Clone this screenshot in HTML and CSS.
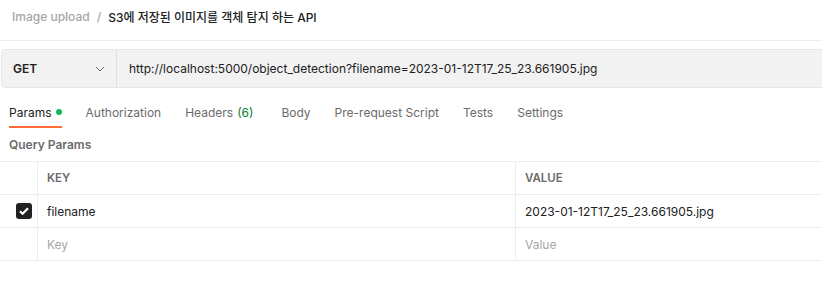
FILE: index.html
```html
<!DOCTYPE html>
<html>
<head>
    <meta charset="utf-8">
    <title>S3에 저장된 이미지를 객체 탐지 하는 API</title>
    <link rel="stylesheet" href="styles.css">
</head>
<body>
    <div class="breadcrumb">
        <span class="crumb-parent">Image upload</span>
        <span class="crumb-sep">/</span>
        <span class="crumb-title">S3에 저장된 이미지를 객체 탐지 하는 API</span>
    </div>

    <div class="url-bar">
        <div class="method">
            <span>GET</span>
            <svg class="chevron" width="10" height="6" viewBox="0 0 10 6">
                <path d="M1 1l4 4 4-4" fill="none" stroke="#6b6b6b" stroke-width="1"/>
            </svg>
        </div>
        <div class="url">http://localhost:5000/object_detection?filename=2023-01-12T17_25_23.661905.jpg</div>
    </div>

    <div class="tabs">
        <div class="tab active">Params<span class="dot"></span></div>
        <div class="tab">Authorization</div>
        <div class="tab">Headers <span class="count">(6)</span></div>
        <div class="tab">Body</div>
        <div class="tab">Pre-request Script</div>
        <div class="tab">Tests</div>
        <div class="tab">Settings</div>
    </div>

    <div class="section-title">Query Params</div>

    <div class="params">
        <div class="row head">
            <div class="cell check"></div>
            <div class="cell key">KEY</div>
            <div class="cell value">VALUE</div>
        </div>
        <div class="row">
            <div class="cell check">
                <span class="checkbox">
                    <svg width="10" height="8" viewBox="0 0 10 8">
                        <path d="M1 4.2l2.6 2.5L9 1.2" fill="none" stroke="#fff" stroke-width="2.2"/>
                    </svg>
                </span>
            </div>
            <div class="cell key">filename</div>
            <div class="cell value">2023-01-12T17_25_23.661905.jpg</div>
        </div>
        <div class="row">
            <div class="cell check"></div>
            <div class="cell key placeholder">Key</div>
            <div class="cell value placeholder">Value</div>
        </div>
    </div>
</body>
</html>
```

FILE: styles.css
```css
body {
    margin: 0;
    font-family: Inter, "Noto Sans CJK KR", sans-serif;
    font-size: 12px;
    color: #212121;
    background: #fff;
    overflow: hidden;
}
.breadcrumb {
    height: 32px;
    padding: 0 12px 8px;
    display: flex;
    align-items: center;
    border-bottom: 1px solid #ededed;
    margin-bottom: 8px;
    font-weight: 500;
}
.crumb-parent {
    color: #a6a6a6;
}
.crumb-sep {
    color: #a6a6a6;
    margin: 0 7px;
}
.crumb-title {
    color: #212121;
}
.url-bar {
    margin-left: 1px;
    margin-right: -10px;
    height: 37px;
    display: flex;
    background: #f2f2f2;
    border: 1px solid #e6e6e6;
    border-radius: 4px;
}
.method {
    width: 115px;
    display: flex;
    align-items: center;
    justify-content: space-between;
    padding: 0 11px;
    box-sizing: border-box;
    border-right: 1px solid #e0e0e0;
    font-weight: 600;
}
.chevron {
    margin-top: 1px;
}
.url {
    display: flex;
    align-items: center;
    padding-left: 12px;
}
.tabs {
    display: flex;
    gap: 24px;
    padding: 0 9px;
    margin-top: 10px;
    height: 30px;
}
.tab {
    color: #6b6b6b;
    display: flex;
    align-items: center;
    height: 28px;
    border-bottom: 2px solid transparent;
}
.tab.active {
    color: #212121;
    border-bottom-color: #ff6c37;
}
.dot {
    width: 6px;
    height: 6px;
    border-radius: 50%;
    background: #0cbb52;
    margin-left: 4px;
}
.count {
    color: #007f31;
    margin-left: 4px;
    margin-right: 4px;
}
.section-title {
    padding: 0 9px;
    height: 33px;
    display: flex;
    align-items: center;
    color: #6b6b6b;
    font-weight: 600;
}
.params {
    border-top: 1px solid #ededed;
}
.row {
    display: flex;
    height: 32px;
    border-bottom: 1px solid #ededed;
}
.cell {
    display: flex;
    align-items: center;
    padding-left: 9px;
    box-sizing: border-box;
}
.check {
    width: 38px;
    padding: 0;
    border-right: 1px solid #ededed;
}
.key {
    width: 478px;
    border-right: 1px solid #ededed;
}
.value {
    flex: 1;
}
.head .cell {
    color: #6b6b6b;
    font-weight: 600;
    font-size: 11.5px;
}
.placeholder {
    color: #a6a6a6;
}
.checkbox {
    width: 16px;
    height: 16px;
    border-radius: 3px;
    background: #212121;
    display: flex;
    align-items: center;
    justify-content: center;
    margin-left: 16px;
}
```
